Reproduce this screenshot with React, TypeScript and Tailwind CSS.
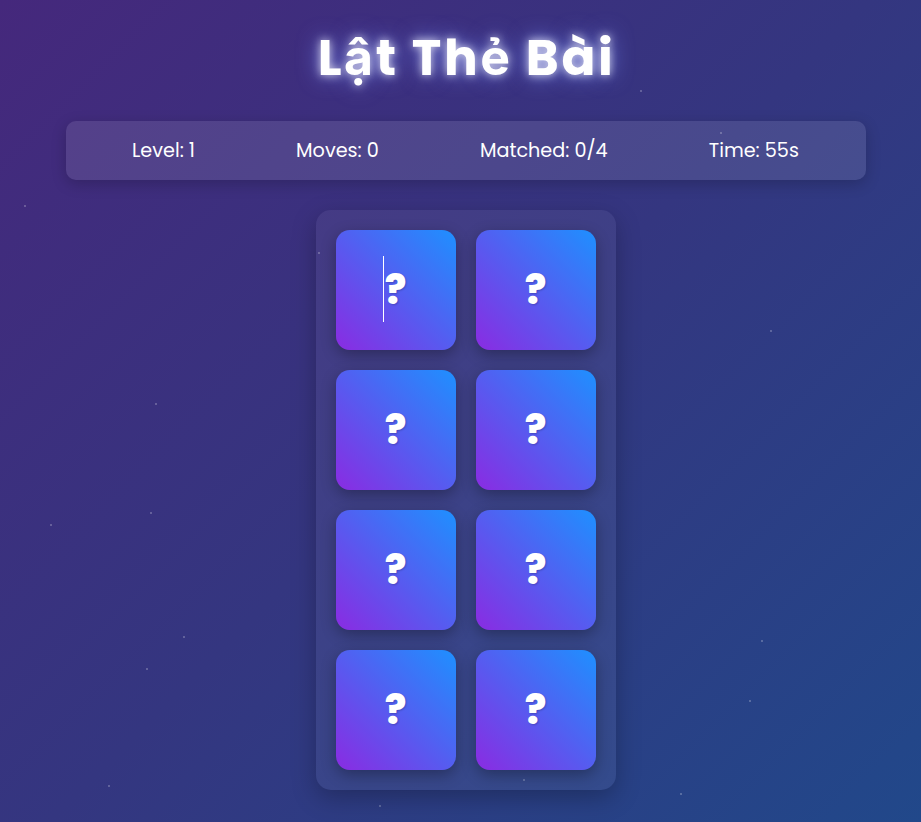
import React from 'react'

const stats = [
  { label: 'Level', value: '1' },
  { label: 'Moves', value: '0' },
  { label: 'Matched', value: '0/4' },
  { label: 'Time', value: '55s' },
]

const stars: [number, number][] = [
  [50, 524], [150, 512], [183, 636], [146, 668], [108, 785], [379, 805], [523, 779], [680, 793],
  [761, 640], [749, 700], [770, 330], [720, 132], [155, 403], [318, 252], [24, 205], [640, 90],
]

function Card({ caret }: { caret?: boolean }) {
  return (
    <button className="relative flex size-[120px] items-center justify-center rounded-[14px] bg-[linear-gradient(45deg,#8a2be2,#1e90ff)] shadow-[0_5px_15px_rgba(0,0,0,0.3)]">
      {caret && <span className="absolute left-[47px] top-[26px] h-[66px] w-px bg-white" />}
      <span className="text-[40px] font-extrabold leading-none text-white [text-shadow:1px_1px_2px_rgba(0,0,0,0.2)]">?</span>
    </button>
  )
}

export default function App() {
  return (
    <div className="relative min-h-[822px] overflow-hidden bg-[linear-gradient(135deg,#45287c_0%,#343680_50%,#21488a_100%)] pl-[10px] font-['Poppins','Inter',sans-serif] text-white">
      {stars.map(([x, y], i) => (
        <span
          key={i}
          className="absolute size-[2px] rounded-full bg-white/30"
          style={{ left: x, top: y }}
        />
      ))}
      <div className="relative mx-auto flex w-[800px] flex-col items-center">
        <h1 className="mt-[29px] pl-[2px] text-[50px] font-bold leading-[58px] tracking-[2.6px] [text-shadow:0_0_10px_rgba(255,255,255,0.8),0_0_22px_rgba(120,140,255,0.9)]">
          Lật Thẻ Bài
        </h1>
        <div className="mt-[34px] flex w-full justify-around rounded-[10px] bg-white/10 px-4 py-4 text-[19.2px] leading-[27px] shadow-[0_4px_15px_rgba(0,0,0,0.2)]">
          {stats.map((s) => (
            <span key={s.label}>
              {s.label}: {s.value}
            </span>
          ))}
        </div>
        <div className="mt-[30px] grid grid-cols-2 gap-5 rounded-[15px] bg-white/5 p-5 shadow-[0_8px_25px_rgba(0,0,0,0.25)]">
          {Array.from({ length: 8 }).map((_, i) => (
            <Card key={i} caret={i === 0} />
          ))}
        </div>
      </div>
    </div>
  )
}
